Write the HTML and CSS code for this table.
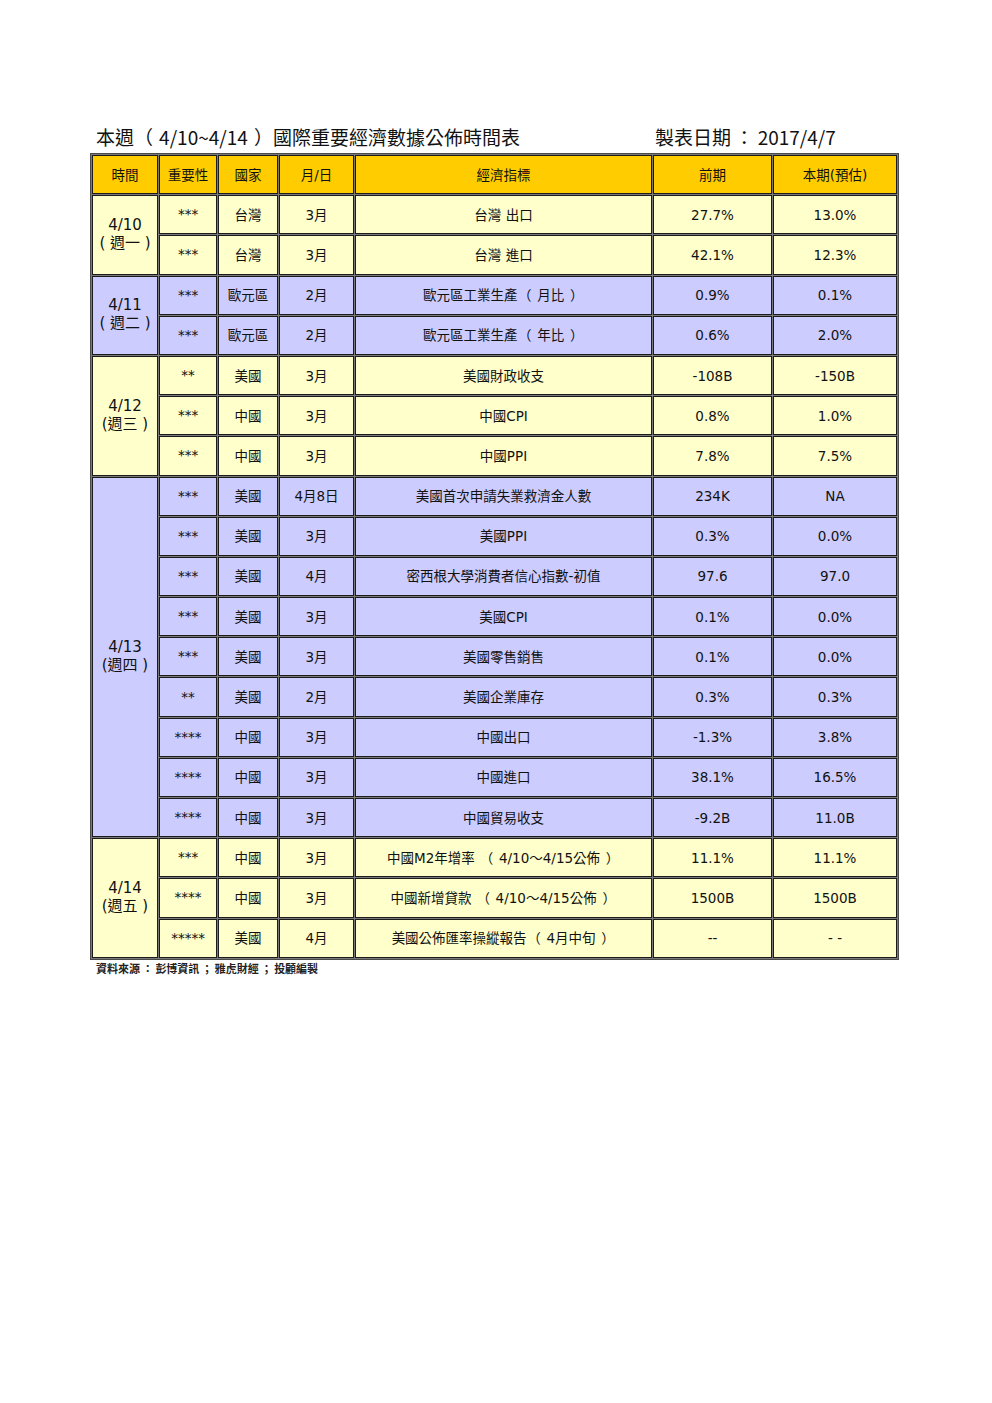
FILE: index.html
```html
<!DOCTYPE html>
<html lang="zh-Hant">
<head>
<meta charset="utf-8">
<title>國際重要經濟數據公佈時間表</title>
<link rel="stylesheet" href="styles.css">
</head>
<body>
<div class="page">
  <div class="titlebar">
    <div class="title">本週<span class="lp t">（</span>4/10~4/14<span class="rp t">）</span>國際重要經濟數據公佈時間表</div>
    <div class="date">製表日期<span class="fw">：</span>2017/4/7</div>
  </div>
  <table class="sched">
    <colgroup>
      <col class="c-time"><col class="c-imp"><col class="c-cty"><col class="c-mon"><col class="c-ind"><col class="c-prev"><col class="c-cur">
    </colgroup>
    <thead>
      <tr class="hd">
        <th>時間</th><th>重要性</th><th>國家</th><th>月/日</th><th>經濟指標</th><th>前期</th><th>本期(預估)</th>
      </tr>
    </thead>
    <tbody>
      <tr class="y">
        <td class="time" rowspan="2">4/10<br>( 週一 )</td>
        <td class="star">***</td><td>台灣</td><td>3月</td><td>台灣 出口</td><td>27.7%</td><td>13.0%</td>
      </tr>
      <tr class="y">
        <td class="star">***</td><td>台灣</td><td>3月</td><td>台灣 進口</td><td>42.1%</td><td>12.3%</td>
      </tr>
      <tr class="p">
        <td class="time" rowspan="2">4/11<br>( 週二 )</td>
        <td class="star">***</td><td>歐元區</td><td>2月</td><td>歐元區工業生產<span class="lp">（</span>月比<span class="rp">）</span></td><td>0.9%</td><td>0.1%</td>
      </tr>
      <tr class="p">
        <td class="star">***</td><td>歐元區</td><td>2月</td><td>歐元區工業生產<span class="lp">（</span>年比<span class="rp">）</span></td><td>0.6%</td><td>2.0%</td>
      </tr>
      <tr class="y">
        <td class="time" rowspan="3">4/12<br>(週三 )</td>
        <td class="star">**</td><td>美國</td><td>3月</td><td>美國財政收支</td><td>-108B</td><td>-150B</td>
      </tr>
      <tr class="y">
        <td class="star">***</td><td>中國</td><td>3月</td><td>中國CPI</td><td>0.8%</td><td>1.0%</td>
      </tr>
      <tr class="y">
        <td class="star">***</td><td>中國</td><td>3月</td><td>中國PPI</td><td>7.8%</td><td>7.5%</td>
      </tr>
      <tr class="p">
        <td class="time" rowspan="9">4/13<br>(週四 )</td>
        <td class="star">***</td><td>美國</td><td>4月8日</td><td>美國首次申請失業救濟金人數</td><td>234K</td><td>NA</td>
      </tr>
      <tr class="p">
        <td class="star">***</td><td>美國</td><td>3月</td><td>美國PPI</td><td>0.3%</td><td>0.0%</td>
      </tr>
      <tr class="p">
        <td class="star">***</td><td>美國</td><td>4月</td><td>密西根大學消費者信心指數-初值</td><td>97.6</td><td>97.0</td>
      </tr>
      <tr class="p">
        <td class="star">***</td><td>美國</td><td>3月</td><td>美國CPI</td><td>0.1%</td><td>0.0%</td>
      </tr>
      <tr class="p">
        <td class="star">***</td><td>美國</td><td>3月</td><td>美國零售銷售</td><td>0.1%</td><td>0.0%</td>
      </tr>
      <tr class="p">
        <td class="star">**</td><td>美國</td><td>2月</td><td>美國企業庫存</td><td>0.3%</td><td>0.3%</td>
      </tr>
      <tr class="p">
        <td class="star">****</td><td>中國</td><td>3月</td><td>中國出口</td><td>-1.3%</td><td>3.8%</td>
      </tr>
      <tr class="p">
        <td class="star">****</td><td>中國</td><td>3月</td><td>中國進口</td><td>38.1%</td><td>16.5%</td>
      </tr>
      <tr class="p">
        <td class="star">****</td><td>中國</td><td>3月</td><td>中國貿易收支</td><td>-9.2B</td><td>11.0B</td>
      </tr>
      <tr class="y">
        <td class="time" rowspan="3">4/14<br>(週五 )</td>
        <td class="star">***</td><td>中國</td><td>3月</td><td>中國M2年增率 <span class="lp">（</span>4/10～4/15公佈<span class="rp">）</span></td><td>11.1%</td><td>11.1%</td>
      </tr>
      <tr class="y">
        <td class="star">****</td><td>中國</td><td>3月</td><td>中國新增貸款 <span class="lp">（</span>4/10～4/15公佈<span class="rp">）</span></td><td>1500B</td><td>1500B</td>
      </tr>
      <tr class="y">
        <td class="star">*****</td><td>美國</td><td>4月</td><td>美國公佈匯率操縱報告<span class="lp">（</span>4月中旬<span class="rp">）</span></td><td>--</td><td>- -</td>
      </tr>
    </tbody>
  </table>
  <div class="source">資料來源<span class="fw">：</span>彭博資訊<span class="fw">；</span>雅虎財經<span class="fw">；</span>投顧編製</div>
</div>
</body>
</html>
```

FILE: styles.css
```css
html, body {
  margin: 0;
  padding: 0;
  background: #ffffff;
}

.page {
  padding: 125px 0 0 90px;
  color: #111111;
  font-family: "DejaVu Sans", "Noto Sans CJK TC", sans-serif;
}

.fw {
  padding: 0 0.2em;
}

.lp {
  padding: 0 0.42em 0 0.05em;
}

.rp {
  padding: 0 0.05em 0 0.42em;
}

.lp.t {
  padding: 0 0.32em 0 0;
}

.rp.t {
  padding: 0 0 0 0.32em;
}

.titlebar {
  display: grid;
  grid-template-columns: 559px auto;
  width: 809px;
  padding-left: 6px;
  box-sizing: border-box;
  margin-bottom: 4px;
  font-family: "Noto Sans CJK TC", sans-serif;
  font-size: 19px;
  line-height: 24px;
  font-weight: normal;
  color: #111111;
}

.sched {
  table-layout: fixed;
  box-sizing: border-box;
  width: 809px;
  border-collapse: separate;
  border-spacing: 1px;
  border: 1px solid #4a4a4a;
  background: #7a7a7a;
}

.c-time { width: 66px; }
.c-imp { width: 58px; }
.c-cty { width: 60px; }
.c-mon { width: 75px; }
.c-ind { width: 297px; }
.c-prev { width: 119px; }
.c-cur { width: 124px; }

.sched th,
.sched td {
  box-sizing: border-box;
  border: 1px solid #1c1c1c;
  height: 39.2px;
  padding: 0;
  text-align: center;
  vertical-align: middle;
  font-size: 13.5px;
  line-height: 18px;
  font-weight: normal;
  white-space: nowrap;
  overflow: hidden;
}

.hd th {
  background: #ffcc00;
}

.y td {
  background: #ffffcc;
}

.p td {
  background: #ccccff;
}

.sched td.star {
  padding-bottom: 1px;
}

.sched td.time {
  font-size: 15px;
  line-height: 18px;
  padding-bottom: 2px;
}

.source {
  padding-left: 6px;
  font-family: "Noto Sans CJK TC", sans-serif;
  font-size: 11px;
  line-height: 16px;
  font-weight: bold;
  color: #222222;
}
```
